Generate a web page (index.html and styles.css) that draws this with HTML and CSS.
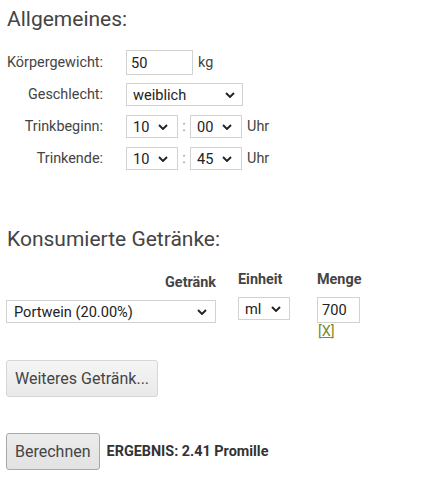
FILE: index.html
```html
<!DOCTYPE html>
<html lang="de">
<head>
<meta charset="utf-8">
<link rel="stylesheet" href="styles.css">
</head>
<body>
<h2 class="title first">Allgemeines:</h2>
<div class="general">
  <label class="lbl">Körpergewicht:</label>
  <div class="ctl"><input class="txt w-weight" type="text" value="50"><span class="unit">kg</span></div>
  <label class="lbl">Geschlecht:</label>
  <div class="ctl"><span class="sel w-gender"><select><option>weiblich</option></select><svg class="chev" viewBox="0 0 10 6"><path d="M1 1 L5 5 L9 1"/></svg></span></div>
  <label class="lbl">Trinkbeginn:</label>
  <div class="ctl"><span class="sel w-time"><select><option>10</option></select><svg class="chev" viewBox="0 0 10 6"><path d="M1 1 L5 5 L9 1"/></svg></span><span class="colon">:</span><span class="sel w-time"><select><option>00</option></select><svg class="chev" viewBox="0 0 10 6"><path d="M1 1 L5 5 L9 1"/></svg></span><span class="unit">Uhr</span></div>
  <label class="lbl">Trinkende:</label>
  <div class="ctl"><span class="sel w-time"><select><option>10</option></select><svg class="chev" viewBox="0 0 10 6"><path d="M1 1 L5 5 L9 1"/></svg></span><span class="colon">:</span><span class="sel w-time"><select><option>45</option></select><svg class="chev" viewBox="0 0 10 6"><path d="M1 1 L5 5 L9 1"/></svg></span><span class="unit">Uhr</span></div>
</div>

<h2 class="title second">Konsumierte Getränke:</h2>
<div class="drinks">
  <div class="col col-drink">
    <div class="head">Getränk</div>
    <span class="sel w-drink"><select><option>Portwein (20.00%)</option></select><svg class="chev" viewBox="0 0 10 6"><path d="M1 1 L5 5 L9 1"/></svg></span>
  </div>
  <div class="col col-unit">
    <div class="head">Einheit</div>
    <span class="sel w-unit"><select><option>ml</option></select><svg class="chev" viewBox="0 0 10 6"><path d="M1 1 L5 5 L9 1"/></svg></span>
  </div>
  <div class="col col-amount">
    <div class="head">Menge</div>
    <input class="txt w-amount" type="text" value="700">
    <div class="remove">[<a href="#">X</a>]</div>
  </div>
</div>

<div class="more-row"><button class="btn">Weiteres Getränk...</button></div>
<div class="calc-row"><button class="btn btn-calc">Berechnen</button><span class="result">ERGEBNIS: 2.41 Promille</span></div>
</body>
</html>
```

FILE: styles.css
```css
html, body {
  margin: 0;
  padding: 0;
  background: #fff;
}
body {
  font-family: Roboto, "Liberation Sans", sans-serif;
  color: #444;
  font-size: 14.4px;
  padding: 0 6px;
}
.title {
  font-size: 21px;
  font-weight: 400;
  line-height: 26px;
  margin: 0 0 0 1px;
  color: #444;
}
.title.first {
  margin-top: 6px;
  margin-bottom: 15px;
}
.title.second {
  margin-top: 52px;
  margin-bottom: 19px;
}
.general {
  display: grid;
  grid-template-columns: max-content auto;
  grid-auto-rows: 31px;
  row-gap: 1px;
  column-gap: 23px;
  align-items: center;
  padding-left: 1px;
}
.lbl {
  text-align: right;
  color: #444;
}
.ctl {
  display: flex;
  align-items: center;
}
.txt {
  box-sizing: border-box;
  border: 1px solid #d2d2d2;
  font-family: Roboto, "Liberation Sans", sans-serif;
  font-size: 14.6px;
  color: #222;
  padding: 0 4px;
  margin: 0;
  height: 25px;
  background: #fff;
  outline: none;
}
.w-weight { width: 67px; }
.w-amount { width: 43px; height: 26px; }
.unit {
  margin-left: 5px;
  color: #444;
}
.colon {
  width: 12px;
  text-align: center;
  color: #888;
}
.sel {
  position: relative;
  display: inline-block;
}
.sel select {
  appearance: none;
  -webkit-appearance: none;
  box-sizing: border-box;
  border: 1px solid #d2d2d2;
  border-radius: 0;
  background: #fff;
  font-family: Roboto, "Liberation Sans", sans-serif;
  font-size: 14.6px;
  color: #222;
  height: 23px;
  padding: 0 0 0 6px;
  margin: 0;
  display: block;
  width: 100%;
  outline: none;
}
.chev {
  position: absolute;
  right: 9px;
  top: 9px;
  width: 10px;
  height: 6px;
  fill: none;
  stroke: #222;
  stroke-width: 1.9;
  pointer-events: none;
}
.w-gender { width: 117px; }
.w-gender .chev { right: 8px; }
.w-time { width: 52px; }
.w-time .chev { right: 10px; }
.w-drink { width: 210px; }
.w-unit { width: 52px; }
.w-drink select { padding-left: 7px; }
.drinks {
  display: flex;
  align-items: flex-start;
}
.col {
  display: flex;
  flex-direction: column;
}
.col-drink {
  align-items: flex-end;
  padding-top: 3px;
}
.col-unit {
  margin-left: 22px;
  align-items: flex-start;
}
.col-amount {
  margin-left: 27px;
  align-items: flex-start;
}
.head {
  font-weight: 700;
  line-height: 18px;
  margin-bottom: 8px;
  color: #444;
}
.remove {
  font-size: 14.4px;
  line-height: 16px;
  margin-top: 1px;
  margin-left: 1px;
  color: #7a8a2e;
}
.remove a {
  color: #7a8a2e;
  text-decoration: underline;
}
.more-row {
  margin-top: 20px;
}
.btn {
  box-sizing: border-box;
  height: 37px;
  padding: 0 8px;
  border: 1px solid #d6d6d6;
  border-radius: 3px;
  background: linear-gradient(#f5f5f5, #e9e9e9);
  color: #444;
  font-family: Roboto, "Liberation Sans", sans-serif;
  font-size: 16px;
  margin: 0;
}
.calc-row {
  margin-top: 36px;
  display: flex;
  align-items: center;
}
.btn-calc {
  border-color: #a8a8a8;
  background: linear-gradient(#ececec, #e2e2e2);
}
.result {
  margin-left: 7px;
  font-weight: 700;
  color: #333;
}
```
